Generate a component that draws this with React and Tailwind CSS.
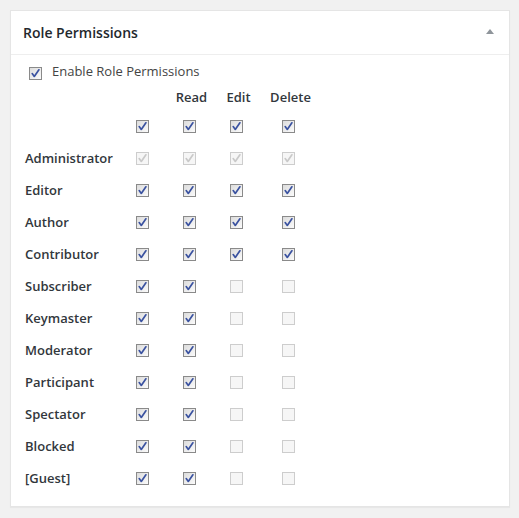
// Role Permissions metabox — WordPress style settings panel

const ROLES = [
  { name: "Administrator", perms: [true, true, true, true], disabled: [true, true, true, true] },
  { name: "Editor", perms: [true, true, true, true] },
  { name: "Author", perms: [true, true, true, true] },
  { name: "Contributor", perms: [true, true, true, true] },
  { name: "Subscriber", perms: [true, true, false, false], disabled: [false, false, true, true] },
  { name: "Keymaster", perms: [true, true, false, false], disabled: [false, false, true, true] },
  { name: "Moderator", perms: [true, true, false, false], disabled: [false, false, true, true] },
  { name: "Participant", perms: [true, true, false, false], disabled: [false, false, true, true] },
  { name: "Spectator", perms: [true, true, false, false], disabled: [false, false, true, true] },
  { name: "Blocked", perms: [true, true, false, false], disabled: [false, false, true, true] },
  { name: "[Guest]", perms: [true, true, false, false], disabled: [false, false, true, true] },
]

function Checkbox({ checked, disabled }) {
  return (
    <span
      className={`relative inline-block w-[13px] h-[13px] border shrink-0 ${
        disabled
          ? "border-[#cdcdcd] bg-[#f6f6f6]"
          : "border-[#8a8a8a] bg-gradient-to-br from-[#dcdcdc] to-[#fbfbfb]"
      }`}
    >
      {checked && (
        <svg viewBox="0 0 11 11" className="absolute inset-0 w-[11px] h-[11px]">
          <path
            d="M2.2 5.6 L4.3 8.4 L8.9 1.8"
            fill="none"
            stroke={disabled ? "#c9c9c9" : "#3a52a0"}
            strokeWidth="1.7"
            strokeLinecap="round"
            strokeLinejoin="round"
          />
        </svg>
      )}
    </span>
  )
}

function Cell({ children }) {
  return <div className="flex items-center justify-center"><span className="mr-[4px] flex">{children}</span></div>
}

export default function App() {
  return (
    <div className="min-h-[518px] bg-[#f1f1f1] pt-[10px] pl-[10px]" style={{ fontFamily: '"Open Sans", sans-serif' }}>
      <div className="w-[500px] bg-white border border-[#e5e5e5] shadow-[0_1px_1px_rgba(0,0,0,0.04)]">
        <div className="h-[44px] flex items-center justify-between pl-[12px] pr-[15px] border-b border-[#eeeeee]">
          <h2 className="text-[14px] font-semibold text-[#23282d] leading-none">Role Permissions</h2>
          <span className="w-0 h-0 border-l-[4px] border-r-[4px] border-b-[5px] border-l-transparent border-r-transparent border-b-[#8f959b] mb-[2px]" />
        </div>

        <div className="pt-[5px] pb-[12px] pl-[14px]">
          <label className="h-[24px] flex items-center gap-[10px] pl-[4px] text-[13px] text-[#444]">
            <span className="flex mt-[2px]"><Checkbox checked /></span>
            <span>Enable Role Permissions</span>
          </label>

          <div className="grid grid-cols-[96px_47px_47px_47px_57px] grid-rows-[26px_repeat(12,32px)] text-[13px] font-semibold text-[#32373c]">
            <div />
            <div />
            <div className="flex items-center justify-center pt-[1px]">Read</div>
            <div className="flex items-center justify-center pt-[1px]">Edit</div>
            <div className="flex items-center justify-center pt-[1px]">Delete</div>

            <div />
            {[0, 1, 2, 3].map(i => (
              <Cell key={i}><Checkbox checked /></Cell>
            ))}

            {ROLES.map(role => (
              <div key={role.name} className="contents">
                <div className="flex items-center pt-[1px]">{role.name}</div>
                {role.perms.map((p, i) => (
                  <Cell key={i}>
                    <Checkbox checked={p} disabled={role.disabled ? role.disabled[i] : false} />
                  </Cell>
                ))}
              </div>
            ))}
          </div>
        </div>
      </div>
    </div>
  )
}
